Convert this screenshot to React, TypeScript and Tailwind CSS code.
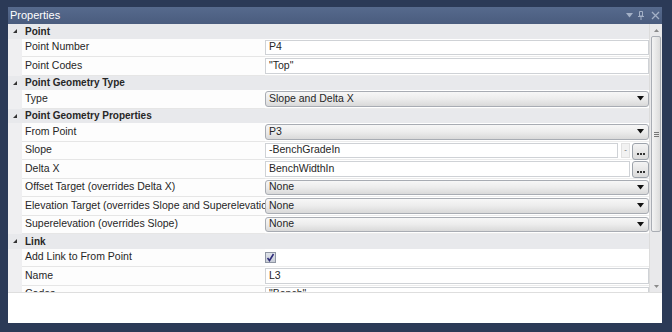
import React from "react";

type Row =
  | { kind: "header"; label: string }
  | { kind: "text"; label: string; value: string; button?: boolean; spin?: boolean }
  | { kind: "select"; label: string; value: string }
  | { kind: "check"; label: string };

const rows: Row[] = [
  { kind: "header", label: "Point" },
  { kind: "text", label: "Point Number", value: "P4" },
  { kind: "text", label: "Point Codes", value: "\"Top\"" },
  { kind: "header", label: "Point Geometry Type" },
  { kind: "select", label: "Type", value: "Slope and Delta X" },
  { kind: "header", label: "Point Geometry Properties" },
  { kind: "select", label: "From Point", value: "P3" },
  { kind: "text", label: "Slope", value: "-BenchGradeIn", button: true, spin: true },
  { kind: "text", label: "Delta X", value: "BenchWidthIn", button: true },
  { kind: "select", label: "Offset Target (overrides Delta X)", value: "None" },
  { kind: "select", label: "Elevation Target (overrides Slope and Superelevation)", value: "None" },
  { kind: "select", label: "Superelevation (overrides Slope)", value: "None" },
  { kind: "header", label: "Link" },
  { kind: "check", label: "Add Link to From Point" },
  { kind: "text", label: "Name", value: "L3" },
  { kind: "text", label: "Codes", value: "\"Bench\"" },
];

function Caret() {
  return (
    <svg width="6" height="6" viewBox="0 0 6 6" className="shrink-0">
      <path d="M5 1 L5 5 L1 5 Z" fill="#333" />
    </svg>
  );
}

function DropArrow() {
  return (
    <svg width="7" height="5" viewBox="0 0 7 5">
      <path d="M0 0 H7 L3.5 4.5 Z" fill="#111" />
    </svg>
  );
}

function DotsButton() {
  return (
    <div className="w-[17px] h-[17px] ml-[2px] shrink-0 rounded-[3px] border border-[#9da3ab] bg-gradient-to-b from-[#f4f4f4] to-[#dadada] flex items-end justify-center pb-[4px]">
      <div className="flex gap-[1px]">
        <div className="w-[2px] h-[2px] bg-[#333]" />
        <div className="w-[2px] h-[2px] bg-[#333]" />
        <div className="w-[2px] h-[2px] bg-[#333]" />
      </div>
    </div>
  );
}

function ValueCell({ row }: { row: Row }) {
  if (row.kind === "select") {
    return (
      <div className="flex-1 h-full py-[1px]">
        <div className="h-full rounded-[3px] border border-[#a8acb3] bg-gradient-to-b from-[#f7f7f7] via-[#ececec] to-[#d9d9d9] flex items-center justify-between pl-[3px] pr-[4px]">
          <span>{row.value}</span>
          <DropArrow />
        </div>
      </div>
    );
  }
  if (row.kind === "check") {
    return (
      <div className="flex-1 h-full flex items-center">
        <div className="w-[11px] h-[11px] border border-[#8f96a3] bg-gradient-to-b from-[#dfe3ea] to-[#c9ced8] flex items-center justify-center">
          <svg width="9" height="9" viewBox="0 0 9 9">
            <path d="M1.5 5 L3.5 7.5 L7.5 1" stroke="#2f2d7a" strokeWidth="1.6" fill="none" />
          </svg>
        </div>
      </div>
    );
  }
  if (row.kind === "text") {
    return (
      <div className="flex-1 h-full flex items-stretch py-[1px]">
        <div className="flex-1 border border-[#cfd2d6] bg-white flex items-center pl-[3px]">
          <span>{row.value}</span>
        </div>
        {row.spin && (
          <div className="w-[9px] ml-[3px] bg-[#f2f2f2] border border-[#e1e1e1] flex items-center justify-center text-[8px] text-[#666]">
            -
          </div>
        )}
        {row.button && <DotsButton />}
      </div>
    );
  }
  return null;
}

export default function App() {
  return (
    <div
      className="w-[672px] h-[332px] bg-[#2b3a57] flex flex-col pt-[7px] pl-[8px] pr-[10px] pb-[9px] text-[10.5px] text-[#262626]"
      style={{ fontFamily: '"Liberation Sans", Arial, sans-serif' }}
    >
      {/* title bar */}
      <div className="h-[17px] bg-gradient-to-b from-[#566a8d] to-[#4a5c7e] flex items-center justify-between pl-[2px] pr-[2px]">
        <span className="text-white text-[11px]">Properties</span>
        <div className="flex items-center gap-[5px]">
          <svg width="7" height="5" viewBox="0 0 7 5">
            <path d="M0 0 H7 L3.5 4.5 Z" fill="#a3b0c6" />
          </svg>
          <svg width="6" height="9" viewBox="0 0 6 9">
            <path d="M1.5 0.5 H4.5 V5 H1.5 Z M0 5.5 H6 M3 5.5 V9" stroke="#a3b0c6" strokeWidth="1" fill="none" />
          </svg>
          <svg width="9" height="9" viewBox="0 0 9 9" className="ml-[2px]">
            <path d="M1 1 L8 8 M8 1 L1 8" stroke="#a3b0c6" strokeWidth="1.3" />
          </svg>
        </div>
      </div>

      <div className="flex-1 bg-white flex flex-col">
        {/* grid + scrollbar */}
        <div className="h-[268px] flex">
          <div className="flex-1 overflow-hidden">
            {rows.map((row, i) =>
              row.kind === "header" ? (
                <div key={i} className="h-[14.5px] bg-[#e8e9ec] flex items-center font-bold text-[10px]">
                  <div className="w-[14px] flex justify-center">
                    <Caret />
                  </div>
                  <span className="pl-[3px]">{row.label}</span>
                </div>
              ) : (
                <div key={i} className="h-[18.5px] flex items-stretch">
                  <div className="w-[14px] shrink-0 bg-[#efeff1]" />
                  <div className="w-[243px] shrink-0 border-b border-[#e6e6e6] flex items-center pl-[3px] overflow-hidden whitespace-nowrap bg-[#fdfdfd]">
                    {row.label}
                  </div>
                  <div className="flex-1 flex border-b border-[#ececec]">
                    <ValueCell row={row} />
                  </div>
                </div>
              )
            )}
          </div>

          {/* scrollbar */}
          <div className="w-[13px] bg-[#e9e9eb] border-l border-[#dcdcdc] flex flex-col items-center">
            <div className="h-[12px] flex items-center justify-center">
              <svg width="5" height="3" viewBox="0 0 5 3">
                <path d="M0 3 H5 L2.5 0 Z" fill="#8a8a8a" />
              </svg>
            </div>
            <div className="w-[10px] h-[196px] rounded-[2px] border border-[#a9adb4] bg-gradient-to-r from-[#f4f4f4] to-[#dcdcdc] flex items-center justify-center">
              <div className="flex flex-col gap-[1px]">
                <div className="w-[5px] h-[1px] bg-[#777]" />
                <div className="w-[5px] h-[1px] bg-[#777]" />
                <div className="w-[5px] h-[1px] bg-[#777]" />
              </div>
            </div>
            <div className="flex-1" />
            <div className="h-[12px] flex items-center justify-center">
              <svg width="5" height="3" viewBox="0 0 5 3">
                <path d="M0 0 H5 L2.5 3 Z" fill="#8a8a8a" />
              </svg>
            </div>
          </div>
        </div>

        {/* description area */}
        <div className="flex-1 border-t border-[#dedede] bg-white" />
      </div>
    </div>
  );
}
